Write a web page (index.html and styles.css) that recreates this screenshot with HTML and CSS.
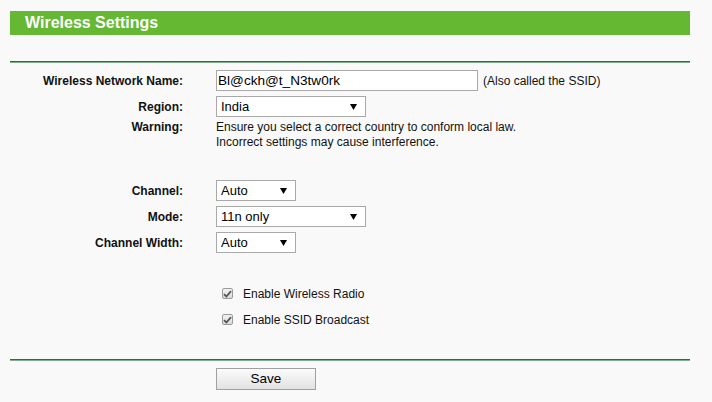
FILE: index.html
```html
<!DOCTYPE html>
<html>
<head>
<meta charset="utf-8">
<link rel="stylesheet" href="styles.css">
</head>
<body>
<div class="page">
  <div class="title">Wireless Settings</div>
  <div class="rule top-rule"></div>
  <div class="form">
    <div class="row r-name">
      <div class="label">Wireless Network Name:</div>
      <div class="field">
        <div class="input">Bl@ckh@t_N3tw0rk</div>
        <span class="hint">(Also called the SSID)</span>
      </div>
    </div>
    <div class="row r-region">
      <div class="label">Region:</div>
      <div class="field">
        <div class="select wide"><span>India</span><svg class="arrow" width="7" height="6" viewBox="0 0 7 6"><path d="M0 0H7L3.5 6Z" fill="#000"/></svg></div>
      </div>
    </div>
    <div class="row r-warning">
      <div class="label">Warning:</div>
      <div class="field text">Ensure you select a correct country to conform local law.<br>Incorrect settings may cause interference.</div>
    </div>
    <div class="row r-channel">
      <div class="label">Channel:</div>
      <div class="field">
        <div class="select narrow"><span>Auto</span><svg class="arrow" width="7" height="6" viewBox="0 0 7 6"><path d="M0 0H7L3.5 6Z" fill="#000"/></svg></div>
      </div>
    </div>
    <div class="row r-mode">
      <div class="label">Mode:</div>
      <div class="field">
        <div class="select wide"><span>11n only</span><svg class="arrow" width="7" height="6" viewBox="0 0 7 6"><path d="M0 0H7L3.5 6Z" fill="#000"/></svg></div>
      </div>
    </div>
    <div class="row r-width">
      <div class="label">Channel Width:</div>
      <div class="field">
        <div class="select narrow"><span>Auto</span><svg class="arrow" width="7" height="6" viewBox="0 0 7 6"><path d="M0 0H7L3.5 6Z" fill="#000"/></svg></div>
      </div>
    </div>
    <div class="row r-check1">
      <div class="label"></div>
      <div class="field check">
        <span class="box"><svg width="9" height="8" viewBox="0 0 9 8"><path d="M1 4.2L3.4 6.5L8 1.2" fill="none" stroke="#555" stroke-width="1.8"/></svg></span>
        <span>Enable Wireless Radio</span>
      </div>
    </div>
    <div class="row r-check2">
      <div class="label"></div>
      <div class="field check">
        <span class="box"><svg width="9" height="8" viewBox="0 0 9 8"><path d="M1 4.2L3.4 6.5L8 1.2" fill="none" stroke="#555" stroke-width="1.8"/></svg></span>
        <span>Enable SSID Broadcast</span>
      </div>
    </div>
  </div>
  <div class="rule bottom-rule"></div>
  <div class="row r-save">
    <div class="label"></div>
    <div class="field"><div class="button">Save</div></div>
  </div>
</div>
</body>
</html>
```
FILE: styles.css
```css
html, body {
  margin: 0;
  padding: 0;
  background: #f9f9f9;
}
body {
  font-family: "Liberation Sans", Arial, sans-serif;
  font-size: 12px;
  color: #000;
}
.page {
  width: 680px;
  padding: 11px 10px 0 10px;
}
.title {
  height: 24px;
  line-height: 24px;
  background: #64b832;
  color: #fff;
  font-weight: bold;
  font-size: 16px;
  padding-left: 15px;
}
.rule {
  height: 1px;
  background: #2d6e3e;
  border-bottom: 1px solid #7fae8a;
}
.top-rule { margin-top: 26px; }
.bottom-rule { margin-top: 29px; }
.row {
  display: flex;
  align-items: center;
  gap: 33px;
}
.label {
  width: 173px;
  flex: none;
  text-align: right;
  font-weight: bold;
  color: #111;
}
.field {
  display: flex;
  align-items: center;
}
.r-name { margin-top: 7px; height: 21px; }
.r-region { margin-top: 5px; height: 21px; }
.r-warning { margin-top: 3px; align-items: flex-start; line-height: 15px; }
.r-channel { margin-top: 30px; height: 21px; }
.r-mode { margin-top: 5px; height: 21px; }
.r-width { margin-top: 5px; height: 21px; }
.r-check1 { margin-top: 30px; height: 21px; }
.r-check2 { margin-top: 5px; height: 21px; }
.r-save { margin-top: 7px; height: 22px; }
.input {
  box-sizing: border-box;
  width: 262px;
  height: 21px;
  border: 1px solid #a9a9a9;
  background: #fff;
  font-size: 13.6px;
  line-height: 19px;
  padding-left: 1px;
}
.hint {
  margin-left: 5px;
  color: #111;
}
.select {
  box-sizing: border-box;
  height: 21px;
  border: 1px solid #a9a9a9;
  background: #fff;
  font-size: 13px;
  line-height: 19px;
  padding: 0 8px 0 4px;
  display: flex;
  align-items: center;
  justify-content: space-between;
}
.select.wide { width: 150px; }
.select.narrow { width: 80px; }
.arrow { display: block; }
.text { color: #111; }
.check {
  padding-left: 6px;
  color: #111;
}
.box {
  box-sizing: border-box;
  width: 11px;
  height: 11px;
  border: 1px solid #9a9a9a;
  border-radius: 2px;
  background: linear-gradient(#f2f2f2, #dcdcdc);
  display: flex;
  align-items: center;
  justify-content: center;
  margin-right: 10px;
}
.box svg { display: block; }
.button {
  box-sizing: border-box;
  width: 100px;
  height: 22px;
  border: 1px solid #a0a0a0;
  background: linear-gradient(#fbfbfb, #e2e2e2);
  text-align: center;
  font-size: 13.5px;
  line-height: 20px;
  color: #000;
}
```
